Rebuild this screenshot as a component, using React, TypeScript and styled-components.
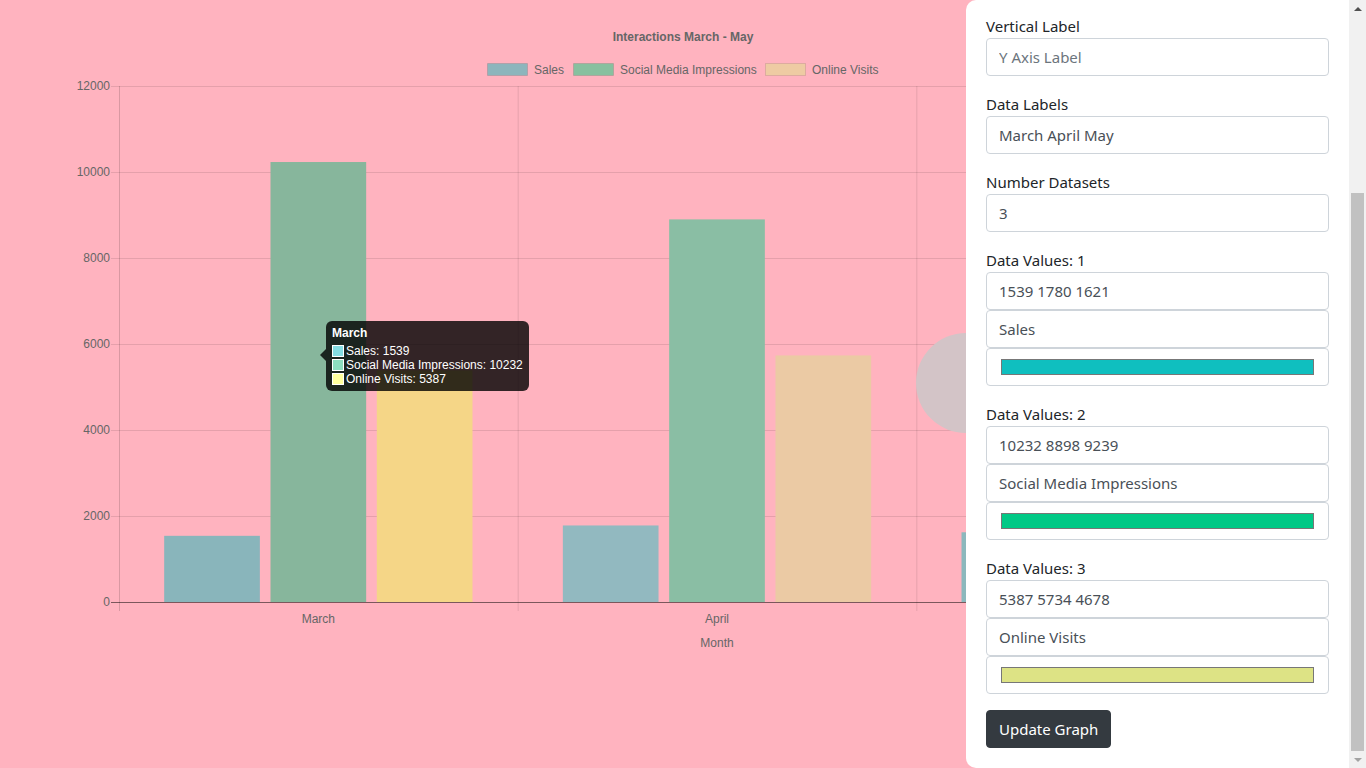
import React from "react";
import styled, { createGlobalStyle } from "styled-components";

const GlobalStyle = createGlobalStyle`
  html, body {
    margin: 0;
    padding: 0;
    background: #ffb3bf;
    overflow: hidden;
  }
`;

const PINK = "#ffb3bf";
const TEXT = "#666666";
const CHART_FONT = "'Liberation Sans', Arial, sans-serif";

const months = ["March", "April", "May"];

const datasets = [
  {
    label: "Sales",
    values: [1539, 1780, 1621],
    bars: ["#89b5bb", "#92b9c0", "#8cb8bd"],
    legend: "#8db5bc",
    tip: "#86dde3",
  },
  {
    label: "Social Media Impressions",
    values: [10232, 8898, 9239],
    bars: ["#87b69c", "#8abea4", "#88b9a0"],
    legend: "#88c09f",
    tip: "#8cdfc0",
  },
  {
    label: "Online Visits",
    values: [5387, 5734, 4678],
    bars: ["#f5d687", "#ebcaa4", "#eed0a0"],
    legend: "#eecba3",
    tip: "#ffff9f",
  },
];

const LEFT = 119;
const RIGHT = 1315;
const TOP = 86;
const BOTTOM = 602;
const MAX = 12000;
const catW = (RIGHT - LEFT) / months.length;
const slot = (catW * 0.8) / datasets.length;
const barW = slot * 0.9;
const yOf = (v: number) => BOTTOM - (v * (BOTTOM - TOP)) / MAX;

const Page = styled.div`
  position: relative;
  width: 100%;
  height: 100vh;
  background: ${PINK};
`;

const ChartWrap = styled.div`
  display: block;
  width: 1366px;
  height: 680px;
`;

const Tooltip = styled.div`
  position: absolute;
  left: 326px;
  top: 321px;
  box-sizing: border-box;
  width: 203px;
  height: 70px;
  padding: 5px 6px;
  border-radius: 6px;
  background: rgba(0, 0, 0, 0.8);
  color: #fff;
  font-family: ${CHART_FONT};
  font-size: 12px;
  line-height: 14px;

  &::before {
    content: "";
    position: absolute;
    left: -6px;
    top: 28px;
    border-style: solid;
    border-width: 6px 6px 6px 0;
    border-color: transparent rgba(0, 0, 0, 0.8) transparent transparent;
  }
`;

const TipTitle = styled.div`
  font-weight: bold;
  margin-bottom: 4px;
`;

const TipRow = styled.div`
  display: flex;
  align-items: center;
  gap: 2px;
`;

const TipSwatch = styled.span<{ $color: string }>`
  display: inline-block;
  box-sizing: border-box;
  width: 12px;
  height: 12px;
  border: 1px solid #fff;
  background: ${(p) => p.$color};
`;

const Toggle = styled.div`
  position: fixed;
  top: 333px;
  right: 350px;
  width: 100px;
  height: 100px;
  border-radius: 50%;
  background: #d3c4c7;
`;

const Panel = styled.aside`
  position: fixed;
  top: 0;
  right: 0;
  display: flex;
  width: 400px;
  height: 100vh;
  background: #fff;
  border-radius: 10px 0 0 10px;
  overflow: hidden;
  font-family: "Noto Sans", "Open Sans", sans-serif;
  color: #212529;
`;

const PanelBody = styled.div`
  flex: 1;
  box-sizing: border-box;
  height: 100%;
  padding: 14px 20px 20px;
  overflow: hidden;
`;

const ScrollRail = styled.div`
  display: flex;
  flex-direction: column;
  width: 17px;
  height: 100%;
  background: #f1f1f1;
`;

const ScrollArrow = styled.div<{ $down?: boolean }>`
  flex: 0 0 17px;
  display: flex;
  align-items: center;
  justify-content: center;

  &::after {
    content: "";
    border-style: solid;
    border-width: ${(p) => (p.$down ? "4px 4px 0 4px" : "0 4px 4px 4px")};
    border-color: ${(p) =>
      p.$down
        ? "#a3a3a3 transparent transparent transparent"
        : "transparent transparent #505050 transparent"};
  }
`;

const ScrollTrack = styled.div`
  flex: 1;
  display: flex;
  flex-direction: column;
  justify-content: flex-end;
  padding: 0 2px;
`;

const ScrollThumb = styled.div`
  height: 558px;
  background: #c1c1c1;
`;

const Group = styled.div`
  display: flex;
  flex-direction: column;
  margin-bottom: 16px;

  &:last-child {
    margin-bottom: 0;
  }
`;

const Label = styled.label`
  font-size: 15px;
  line-height: 24px;
`;

const Field = styled.input`
  box-sizing: border-box;
  width: 100%;
  height: 38px;
  margin: 0;
  padding: 6px 12px;
  border: 1px solid #ced4da;
  border-radius: 4px;
  background: #fff;
  color: #495057;
  font-family: inherit;
  font-size: 15px;

  &::placeholder {
    color: #6c757d;
  }
`;

const ColorField = styled(Field)`
  padding: 10px 14px;
  cursor: pointer;

  &::-webkit-color-swatch-wrapper {
    padding: 0;
  }
  &::-webkit-color-swatch {
    border: 1px solid #777;
    border-radius: 0;
  }
`;

const UpdateButton = styled.button`
  align-self: flex-start;
  height: 38px;
  padding: 0 12px;
  border: 1px solid #343a40;
  border-radius: 4px;
  background: #343a40;
  color: #fff;
  font-family: inherit;
  font-size: 15px;
`;

const Chart = () => {
  const yTicks = [0, 2000, 4000, 6000, 8000, 10000, 12000];
  const legend = [
    { x: 487, tx: 534 },
    { x: 573, tx: 620 },
    { x: 765, tx: 812 },
  ];
  return (
    <svg width={1366} height={680} viewBox="0 0 1366 680">
      <text
        x={683}
        y={41}
        textAnchor="middle"
        fontFamily={CHART_FONT}
        fontSize={12}
        fontWeight="bold"
        fill={TEXT}
      >
        Interactions March - May
      </text>
      {datasets.map((d, i) => (
        <g key={d.label}>
          <rect
            x={legend[i].x + 0.5}
            y={63.5}
            width={40}
            height={12}
            fill={d.legend}
            stroke="rgba(0,0,0,0.1)"
          />
          <text x={legend[i].tx} y={74} fontFamily={CHART_FONT} fontSize={12} fill={TEXT}>
            {d.label}
          </text>
        </g>
      ))}

      {yTicks.map((t) => (
        <g key={t}>
          <line
            x1={111}
            x2={RIGHT}
            y1={yOf(t) + 0.5}
            y2={yOf(t) + 0.5}
            stroke={t === 0 ? "rgba(0,0,0,0.3)" : "rgba(0,0,0,0.1)"}
          />
          <text
            x={110}
            y={yOf(t) + 4}
            textAnchor="end"
            fontFamily={CHART_FONT}
            fontSize={12}
            fill={TEXT}
          >
            {t}
          </text>
        </g>
      ))}
      {[0, 1, 2, 3].map((i) => (
        <line
          key={i}
          x1={LEFT + i * catW + 0.5}
          x2={LEFT + i * catW + 0.5}
          y1={TOP}
          y2={611}
          stroke={i === 0 ? "rgba(0,0,0,0.15)" : "rgba(0,0,0,0.1)"}
        />
      ))}

      {months.map((m, i) =>
        datasets.map((d, j) => {
          const x = LEFT + i * catW + catW * 0.1 + j * slot + slot * 0.05;
          const y = yOf(d.values[i]);
          return (
            <rect
              key={m + d.label}
              x={x}
              y={y}
              width={barW}
              height={BOTTOM - y}
              fill={d.bars[i]}
            />
          );
        })
      )}
      <line x1={111} x2={RIGHT} y1={602.5} y2={602.5} stroke="rgba(0,0,0,0.3)" />

      {months.map((m, i) => (
        <text
          key={m}
          x={LEFT + i * catW + catW / 2}
          y={623}
          textAnchor="middle"
          fontFamily={CHART_FONT}
          fontSize={12}
          fill={TEXT}
        >
          {m}
        </text>
      ))}
      <text
        x={(LEFT + RIGHT) / 2}
        y={647}
        textAnchor="middle"
        fontFamily={CHART_FONT}
        fontSize={12}
        fill={TEXT}
      >
        Month
      </text>
    </svg>
  );
};

const colors = ["#0fbfbf", "#00c986", "#dde385"];

export default function App() {
  return (
    <Page>
      <GlobalStyle />
      <ChartWrap>
        <Chart />
      </ChartWrap>

      <Tooltip>
        <TipTitle>March</TipTitle>
        {datasets.map((d) => (
          <TipRow key={d.label}>
            <TipSwatch $color={d.tip} />
            <span>
              {d.label}: {d.values[0]}
            </span>
          </TipRow>
        ))}
      </Tooltip>

      <Toggle />

      <Panel>
        <PanelBody>
          <Group>
            <Label>Vertical Label</Label>
            <Field placeholder="Y Axis Label" />
          </Group>
          <Group>
            <Label>Data Labels</Label>
            <Field defaultValue="March April May" />
          </Group>
          <Group>
            <Label>Number Datasets</Label>
            <Field defaultValue="3" />
          </Group>
          {datasets.map((d, i) => (
            <Group key={d.label}>
              <Label>Data Values: {i + 1}</Label>
              <Field defaultValue={d.values.join(" ")} />
              <Field defaultValue={d.label} />
              <ColorField type="color" defaultValue={colors[i]} />
            </Group>
          ))}
          <Group>
            <UpdateButton>Update Graph</UpdateButton>
          </Group>
        </PanelBody>
        <ScrollRail>
          <ScrollArrow />
          <ScrollTrack>
            <ScrollThumb />
          </ScrollTrack>
          <ScrollArrow $down />
        </ScrollRail>
      </Panel>
    </Page>
  );
}
